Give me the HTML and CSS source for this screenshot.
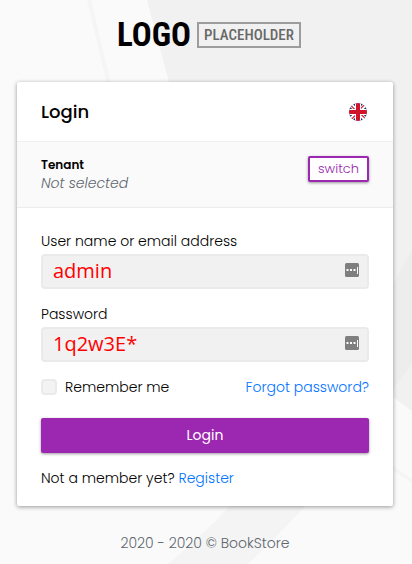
FILE: index.html
```html
<!DOCTYPE html>
<html lang="en">
<head>
<meta charset="utf-8">
<meta name="viewport" content="width=device-width, initial-scale=1">
<title>Login</title>
<link rel="stylesheet" href="styles.css">
</head>
<body>
<svg class="backdrop" viewBox="0 0 412 564" preserveAspectRatio="xMidYMid slice" aria-hidden="true">
  <path fill="#f5f5f5" d="M87 0h4l20 84h-4z"/>
  <path fill="#f1f1f1" d="M147 0H412V411L393 397C290 330 200 210 169 82Z"/>
  <path fill="#ededed" d="M412 250V363L393 389 340 380Z"/>
  <path fill="#f5f5f5" d="M380 457l32 22v4l-32-22z"/>
  <path fill="#f4f4f4" d="M230 506H305Q280 534 248 564H168Q202 536 230 506Z"/>
</svg>
<div class="page">
  <div class="brand">
    <span class="brand-name">LOGO</span>
    <span class="brand-tag">PLACEHOLDER</span>
  </div>
  <main class="card">
    <header class="card-header">
      <h1 class="title">Login</h1>
      <button class="language" type="button" aria-label="English">
        <svg width="18" height="18" viewBox="0 0 18 18">
          <defs><clipPath id="round"><circle cx="9" cy="9" r="9"/></clipPath></defs>
          <g clip-path="url(#round)">
            <path fill="#1b2f6b" d="M0 0h18v18H0z"/>
            <path stroke="#fff" stroke-width="4" d="M0 0l18 18M18 0L0 18"/>
            <path stroke="#d32f45" stroke-width="1.3" d="M0 .8l8 8M18 17.2l-8-8M17.2 0l-8 8M.8 18l8-8"/>
            <path stroke="#fff" stroke-width="6" d="M9 0v18M0 9h18"/>
            <path stroke="#cf142b" stroke-width="4" d="M9 0v18M0 9h18"/>
          </g>
        </svg>
      </button>
    </header>
    <section class="tenant">
      <div>
        <div class="tenant-label">Tenant</div>
        <div class="tenant-value">Not selected</div>
      </div>
      <button class="switch" type="button">switch</button>
    </section>
    <form class="form">
      <div class="field">
        <label for="user">User name or email address</label>
        <div class="control">
          <input id="user" class="text-input" type="text" value="admin">
          <svg class="filler" width="14" height="14" viewBox="0 0 14 14" aria-hidden="true"><rect width="14" height="14" rx="1.5" fill="#7f7f7f"/><path fill="#fff" d="M1.500 6h2v2h-2zM5 6h2v2H5zM8.500 6h2v2h-2zM12 4h1v7h-1z"/></svg>
        </div>
      </div>
      <div class="field">
        <label for="password">Password</label>
        <div class="control">
          <input id="password" class="text-input" type="text" value="1q2w3E*">
          <svg class="filler" width="14" height="14" viewBox="0 0 14 14" aria-hidden="true"><rect width="14" height="14" rx="1.5" fill="#7f7f7f"/><path fill="#fff" d="M1.500 6h2v2h-2zM5 6h2v2H5zM8.500 6h2v2h-2zM12 4h1v7h-1z"/></svg>
        </div>
      </div>
      <div class="options">
        <label class="remember" for="remember"><input id="remember" class="check" type="checkbox">Remember me</label>
        <a href="#forgot">Forgot password?</a>
      </div>
      <button class="submit" type="submit">Login</button>
      <p class="signup">Not a member yet? <a href="#register">Register</a></p>
    </form>
  </main>
  <footer class="footer">2020 - 2020 © BookStore</footer>
</div>
</body>
</html>
```
FILE: styles.css
```css
* { box-sizing: border-box; }

body {
  margin: 0;
  background: #fafafa;
  color: #000;
  font: 300 14px/20px Poppins, Inter, "Liberation Sans", sans-serif;
}

button, input { font: inherit; }

a { color: #0073ff; text-decoration: none; }

.backdrop {
  position: absolute;
  inset: 0;
  width: 100%;
  height: 100%;
}

.page {
  position: relative;
  padding: 20px 19px 0 17px;
}

.brand {
  display: flex;
  align-items: center;
  justify-content: center;
  gap: 6px;
  height: 30px;
  margin-bottom: 32px;
  padding-left: 8px;
  font-family: "Roboto Condensed", "Liberation Sans", sans-serif;
}

.brand-name { font-size: 33px; font-weight: 700; line-height: 30px; }

.brand-tag {
  padding: 0 5px;
  border: 2px solid #9c9c9c;
  color: #686868;
  font-size: 15px;
  font-weight: 500;
  line-height: 22px;
}

.card {
  background: #fff;
  border-radius: 2px;
  box-shadow: 0 1px 4px rgba(0, 0, 0, .4);
}

.card-header {
  display: flex;
  align-items: center;
  justify-content: space-between;
  height: 60px;
  padding: 0 24px;
  border-bottom: 1px solid #f0f0f2;
}

.title { margin: 0; font-size: 18px; font-weight: 500; line-height: 24px; }

.language {
  display: flex;
  margin-right: 2px;
  padding: 0;
  border: 0;
  background: none;
}

.tenant {
  display: flex;
  align-items: flex-start;
  justify-content: space-between;
  padding: 14px 24px;
  border-bottom: 1px solid #ebebf0;
  background: #fafafa;
}

.tenant-label { font-size: 12px; font-weight: 600; line-height: 18px; }
.tenant-value { color: #5d666e; font-style: italic; line-height: 19px; }

.switch {
  height: 26px;
  padding: 0 8px;
  border: 2px solid #9c27b0;
  border-radius: 2px;
  background: #fff;
  box-shadow: 0 1px 3px rgba(0, 0, 0, .4);
  color: #9c27b0;
  font-size: 13px;
  line-height: 20px;
}

.form { padding: 23px 24px 18px; }

.field { margin-bottom: 15px; }

.field label { display: block; margin-bottom: 3px; }

.control { position: relative; }

.text-input {
  display: block;
  width: 100%;
  height: 35px;
  padding: 0 40px 2px 10px;
  border: 2px solid #eaeaea;
  border-radius: 4px;
  background: #f1f1f1;
  color: #f00;
  font-family: "Open Sans", sans-serif;
  font-size: 20px;
  font-weight: 400;
}

.filler { position: absolute; top: 9px; right: 10px; }

.options {
  display: flex;
  align-items: center;
  justify-content: space-between;
  margin-bottom: 21px;
}

.remember { display: flex; align-items: center; gap: 8px; }

.check {
  width: 16px;
  height: 16px;
  margin: 0;
  appearance: none;
  border: 2px solid #eaeaea;
  border-radius: 4px;
  background: #f3f3f3;
}

.submit {
  display: block;
  width: 100%;
  height: 35px;
  padding: 0 0 2px;
  border: 0;
  border-radius: 2px;
  background: #9c27b0;
  box-shadow: 0 1px 3px rgba(0, 0, 0, .4);
  color: #fff;
  font-weight: 400;
}

.signup { margin: 15px 0 0; }

.footer { padding: 27px 0 10px; color: #5d666e; text-align: center; }
```
